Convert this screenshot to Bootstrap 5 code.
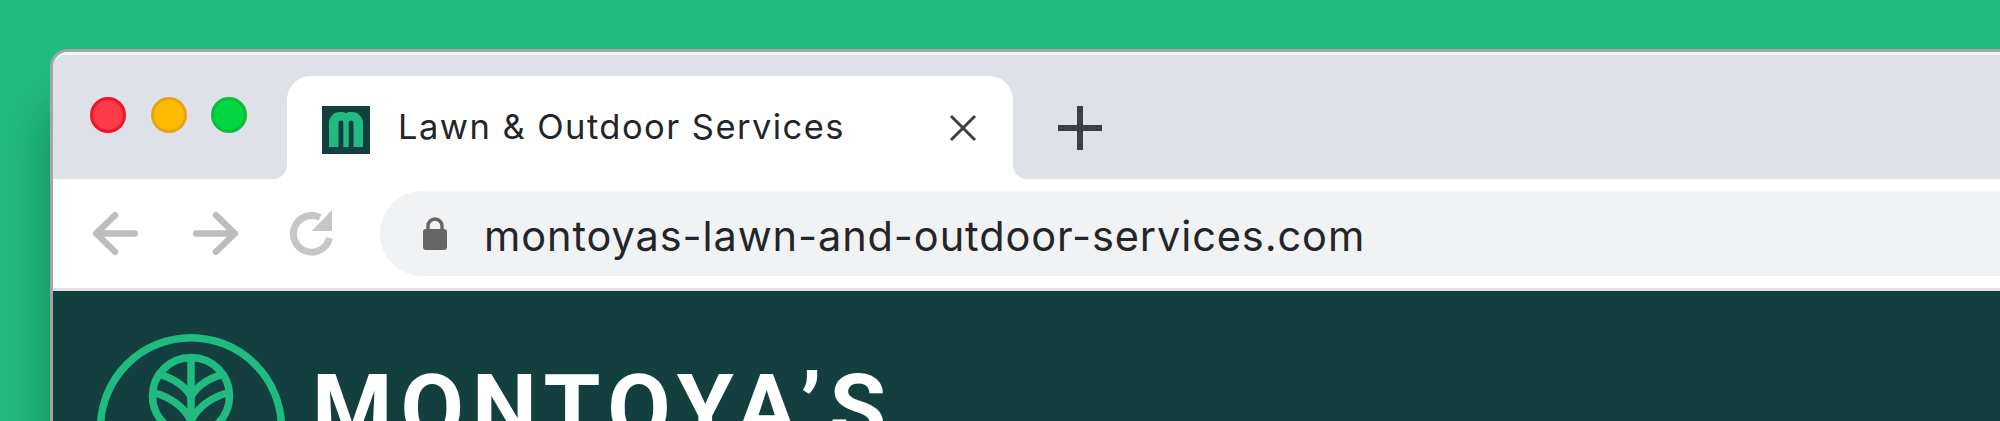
<!doctype html>
<html lang="en">
<head>
<meta charset="utf-8">
<title>Lawn &amp; Outdoor Services</title>
<link href="https://cdn.jsdelivr.net/npm/bootstrap@5.3.0/dist/css/bootstrap.min.css" rel="stylesheet">
<style>
html,body{height:421px;overflow:hidden}
body{background:#20bb80;font-family:Inter,"Liberation Sans",sans-serif;padding:49px 0 0 50px}
.win{width:1950px;height:372px;overflow:hidden;background:#fff;border:solid #a6a6a6;border-width:3px 0 0 3px;border-top-left-radius:18px;box-shadow:0 60px 50px rgba(0,0,0,.3)}
.tabbar{height:127px;background:linear-gradient(#dee1e8 50%,#fff 50%);border-top:3px solid #f3f4f6;border-top-left-radius:15px}
.lights{width:234px;padding:42px 0 0 37px;gap:24.6px;background:#dee1e8;border-bottom-right-radius:14px;height:124px;border-top-left-radius:13px}
.light{width:36px;height:36px;border-radius:50%;border:3px solid}
.lr{background:#ff3b4a;border-color:#f01426}
.ly{background:#ffbb00;border-color:#e8a312}
.lg{background:#00d640;border-color:#0dbd3a}
.tab{width:726px;height:103px;margin-top:21px;background:#fff;border-radius:24px 24px 0 0;padding:30px 0 0 35px}
.fav{width:48px;height:48px;background:#133f3f;flex:none}
.tabtitle{font-size:34.5px;line-height:46px;color:#232529;margin:-2px 0 0 28px;letter-spacing:1.45px;width:523px;white-space:nowrap}
.tabx{margin:8px 0 0 28px}
.restbar{flex:1;background:#dee1e8;border-bottom-left-radius:14px;height:124px;padding-left:45px}
.plus{margin-top:51px}
.toolbar{height:112px;border-bottom:3px solid #e0e1e5;padding-top:12px}
.nav-ic{margin-top:18px}
.ic-back{margin-left:40px}
.ic-fwd{margin-left:55px}
.ic-rel{margin-left:51px}
.pill{margin-left:45px;flex:1;height:85px;background:#f1f2f4;border-radius:42px 0 0 42px;padding-left:43px}
.url{font-size:41.5px;line-height:85px;color:#232529;margin:6px 0 0 37px;letter-spacing:.9px;white-space:nowrap}
.site{background:#133f3f;height:150px;padding:42px 0 0 43px}
.brand{font-family:Roboto,"Liberation Sans",sans-serif;font-weight:700;font-size:92px;line-height:1;color:#fff;margin:30px 0 0 24px;letter-spacing:8px;white-space:nowrap}
</style>
</head>
<body>
<div class="win">
  <div class="tabbar d-flex">
    <div class="lights d-flex"><span class="light lr"></span><span class="light ly"></span><span class="light lg"></span></div>
    <div class="tab d-flex">
      <div class="fav"><svg class="d-block" width="48" height="48" viewBox="0 0 48 48"><path d="M7 41V17a11 11 0 0 1 11-11h2a7 7 0 0 1 4 1.3A7 7 0 0 1 28 6h2a11 11 0 0 1 11 11v24H31.5V17a2.4 2.4 0 0 0-4.8 0v24h-5.4V17a2.4 2.4 0 0 0-4.8 0v24z" fill="#20bb80"/></svg></div>
      <div class="tabtitle">Lawn &amp; Outdoor Services</div>
      <svg class="tabx" width="28" height="28" viewBox="0 0 28 28"><path d="M2 2l24 24M26 2L2 26" stroke="#3c4043" stroke-width="3"/></svg>
    </div>
    <div class="restbar"><svg class="d-block plus" width="44" height="44" viewBox="0 0 44 44"><path d="M22 0v44M0 22h44" stroke="#3c4043" stroke-width="6"/></svg></div>
  </div>
  <div class="toolbar d-flex">
    <svg class="nav-ic ic-back" width="45" height="48" viewBox="0 0 45 48"><path d="M22 6.25L3.25 24.5 22 42.75M3.25 24.5h38.5" fill="none" stroke="#bdbdbf" stroke-width="6.5" stroke-linecap="round" stroke-linejoin="round"/></svg>
    <svg class="nav-ic ic-fwd" width="45" height="48" viewBox="0 0 45 48"><path d="M23 6.25L41.75 24.5 23 42.75M41.75 24.5H3.25" fill="none" stroke="#bdbdbf" stroke-width="6.5" stroke-linecap="round" stroke-linejoin="round"/></svg>
    <svg class="nav-ic ic-rel" width="46" height="48" viewBox="0 0 46 48"><path d="M31 8.5A18.3 18.3 0 1 0 40.5 29" fill="none" stroke="#c6c6c8" stroke-width="7"/><path d="M43 1v21H22.7z" fill="#c6c6c8"/></svg>
    <div class="pill d-flex align-items-center">
      <svg width="24" height="36" viewBox="0 0 24 36"><path d="M5 15V10a7 7 0 0 1 14 0v5" fill="none" stroke="#666" stroke-width="3.4"/><rect y="13" width="24" height="21" rx="3" fill="#666"/></svg>
      <div class="url">montoyas-lawn-and-outdoor-services.com</div>
    </div>
  </div>
  <div class="site d-flex">
    <svg width="192" height="192" viewBox="0 0 192 192" class="flex-shrink-0"><g fill="none" stroke="#20bb80" stroke-width="7.5"><circle cx="95" cy="95.25" r="90.5"/><circle cx="95" cy="63" r="38.5"/><path d="M95 24v96"/><path d="M66 42c14 5 24 12 29 22 5-10 15-17 29-22"/><path d="M59 60c17 5 29 14 36 28 7-14 19-23 36-28"/></g></svg>
    <div class="brand">MONTOYA’S</div>
  </div>
</div>
</body>
</html>
